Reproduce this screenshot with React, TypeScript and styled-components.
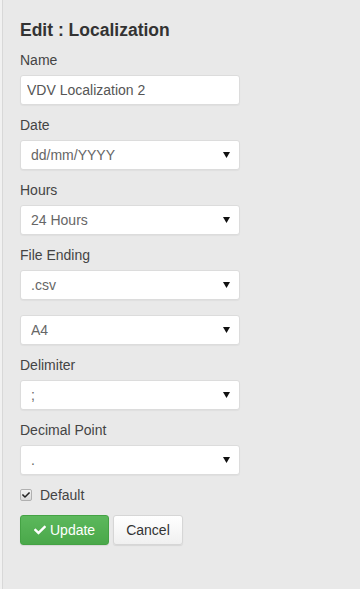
import React from "react";
import styled, { createGlobalStyle } from "styled-components";
import { FaCheck } from "react-icons/fa";

const GlobalStyle = createGlobalStyle`
    html, body {
        margin: 0;
        padding: 0;
        background: #f1f1f1;
        font-family: "Liberation Sans", Arial, sans-serif;
    }
`;

const Page = styled.div`
    margin-left: 2px;
    min-height: 589px;
    box-sizing: border-box;
    background: #e9e9e9;
    border-left: 1px solid #d8d8d8;
    padding: 18px 0 0 17px;
`;

const Title = styled.h2`
    margin: 0 0 8px 0;
    font-size: 17.5px;
    line-height: 24px;
    font-weight: bold;
    color: #333;
`;

const Group = styled.div<{ $gap?: number }>`
    display: flex;
    flex-direction: column;
    gap: 5px;
    width: 220px;
    margin-bottom: ${(p) => p.$gap ?? 10}px;
`;

const Label = styled.label`
    font-size: 14px;
    line-height: 20px;
    color: #444;
`;

const fieldBase = `
    box-sizing: border-box;
    width: 220px;
    height: 30px;
    border: 1px solid #dcdcdc;
    border-radius: 3px;
    background: #fff;
    color: #555;
    font-family: "Liberation Sans", Arial, sans-serif;
    outline: none;
    box-shadow: 0 1px 1px rgba(0,0,0,0.04);
`;

const TextInput = styled.input`
    ${fieldBase}
    padding: 0 6px;
    font-size: 14px;
`;

const SelectWrap = styled.div`
    position: relative;
    width: 220px;
    height: 30px;
`;

const Select = styled.select`
    ${fieldBase}
    appearance: none;
    -webkit-appearance: none;
    padding: 0 24px 0 10px;
    font-size: 14px;
    color: #666;
`;

const Arrow = styled.svg`
    position: absolute;
    right: 10px;
    top: 12px;
    width: 7px;
    height: 6px;
    pointer-events: none;
`;

const CheckRow = styled.label`
    display: flex;
    align-items: center;
    gap: 8px;
    height: 20px;
    margin-bottom: 10px;
    font-size: 14px;
    color: #444;
`;

const Box = styled.span`
    box-sizing: border-box;
    width: 12px;
    height: 12px;
    border: 1px solid #b0b0b0;
    border-radius: 2px;
    background: linear-gradient(#f2f2f2, #d8d8d8);
    display: flex;
    align-items: center;
    justify-content: center;
    color: #222;
    font-size: 8px;
`;

const Buttons = styled.div`
    display: flex;
    gap: 4px;
`;

const Button = styled.button<{ $primary?: boolean }>`
    box-sizing: border-box;
    height: 30px;
    padding: 0 ${(p) => (p.$primary ? 13 : 12)}px;
    border-radius: 3px;
    font-family: "Liberation Sans", Arial, sans-serif;
    font-size: 14px;
    display: flex;
    align-items: center;
    gap: 4px;
    cursor: pointer;
    border: 1px solid ${(p) => (p.$primary ? "#44a244" : "#d6d6d6")};
    color: ${(p) => (p.$primary ? "#fff" : "#333")};
    background: ${(p) =>
        p.$primary
            ? "linear-gradient(#5cb85c, #4aa84a)"
            : "linear-gradient(#ffffff, #f0f0f0)"};
    box-shadow: 0 1px 1px rgba(0,0,0,0.08);
`;

const fields = [
    { label: "Date", value: "dd/mm/YYYY" },
    { label: "Hours", value: "24 Hours" },
    { label: "File Ending", value: ".csv", gap: 15 },
    { value: "A4" },
    { label: "Delimiter", value: ";" },
    { label: "Decimal Point", value: "." },
];

const Dropdown: React.FC<{ value: string }> = ({ value }) => (
    <SelectWrap>
        <Select defaultValue={value}>
            <option>{value}</option>
        </Select>
        <Arrow viewBox="0 0 7 6">
            <path d="M0 0h7L3.5 6z" fill="#111" />
        </Arrow>
    </SelectWrap>
);

const App: React.FC = () => {
    return (
        <>
            <GlobalStyle />
            <Page>
                <Title>Edit : Localization</Title>

                <Group>
                    <Label>Name</Label>
                    <TextInput defaultValue="VDV Localization 2" />
                </Group>

                {fields.map((f, i) => (
                    <Group key={i} $gap={f.gap}>
                        {f.label && <Label>{f.label}</Label>}
                        <Dropdown value={f.value} />
                    </Group>
                ))}

                <CheckRow>
                    <Box><FaCheck /></Box>
                    Default
                </CheckRow>

                <Buttons>
                    <Button $primary><FaCheck size={12} /> Update</Button>
                    <Button>Cancel</Button>
                </Buttons>
            </Page>
        </>
    );
};

export default App;
